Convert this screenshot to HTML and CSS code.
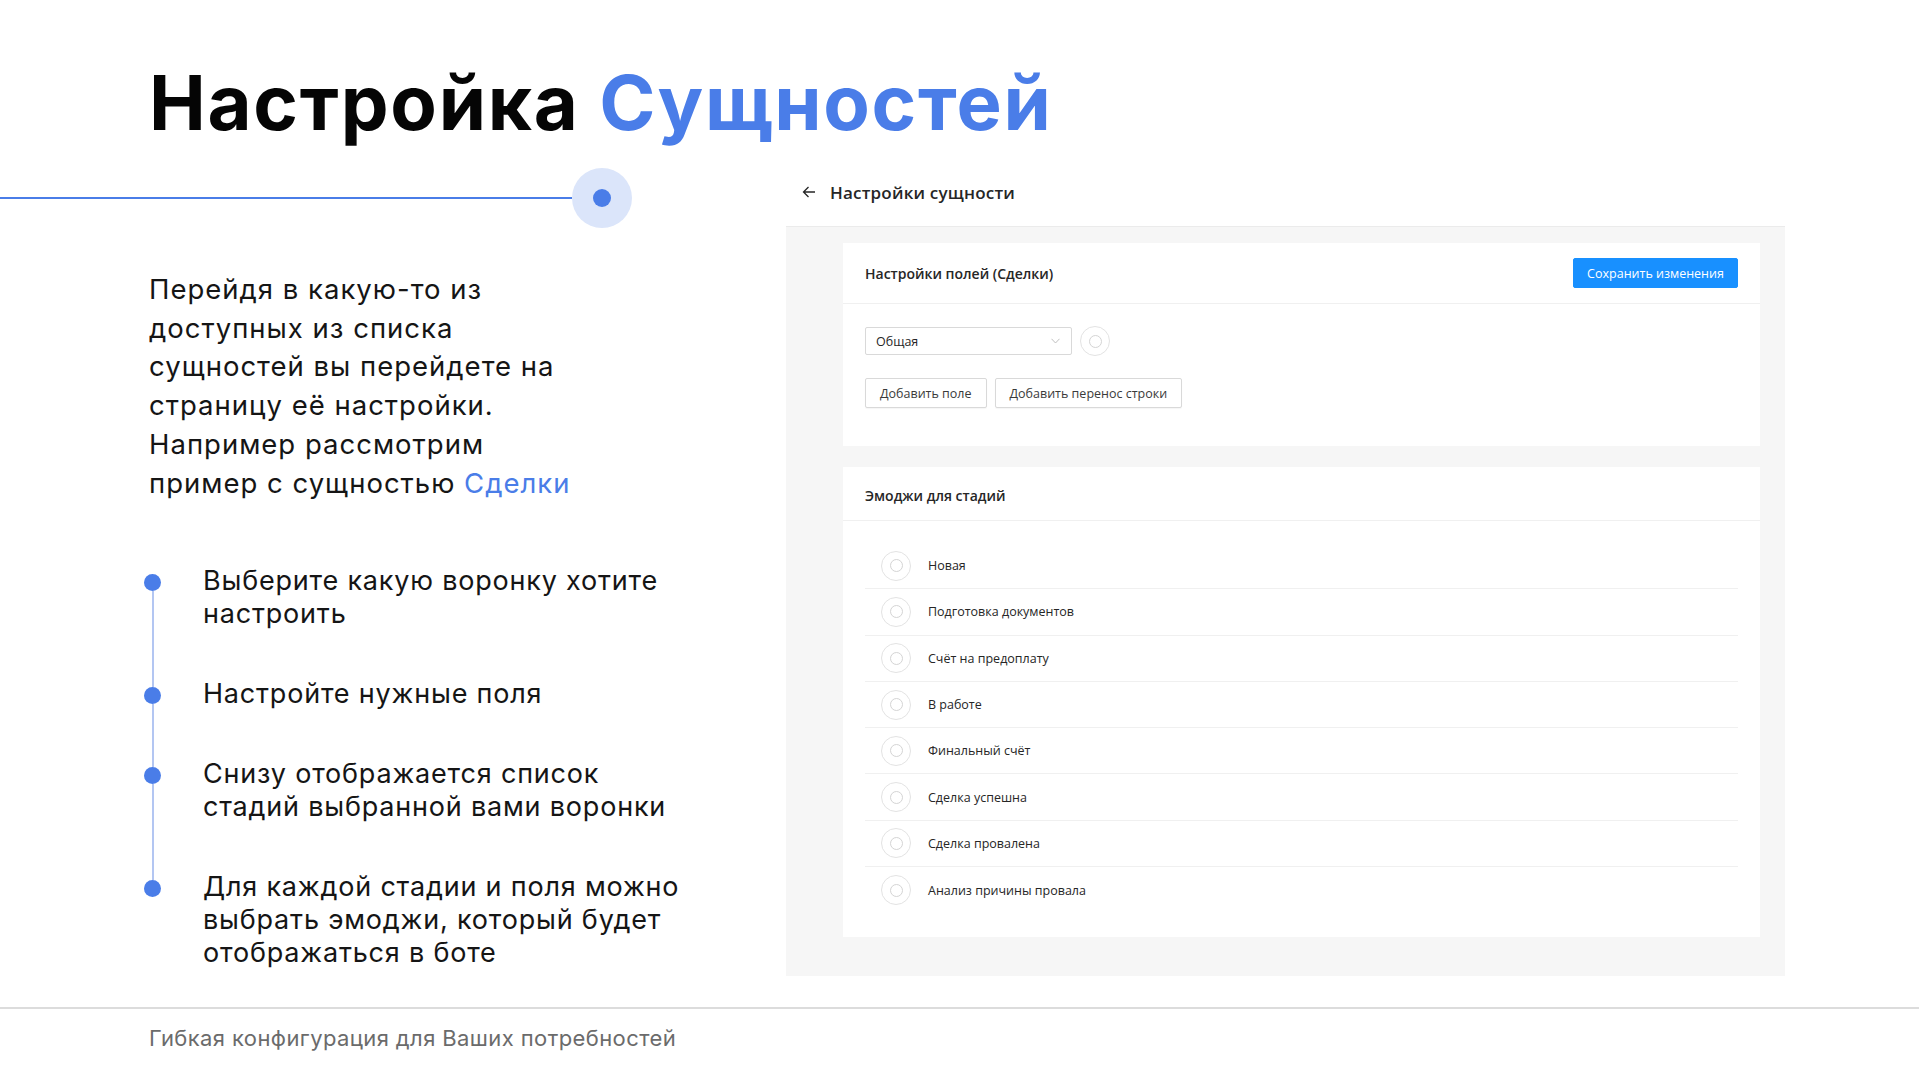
FILE: index.html
```html
<!DOCTYPE html>
<html lang="ru">
<head>
<meta charset="utf-8">
<title>Настройка Сущностей</title>
<link rel="stylesheet" href="styles.css">
</head>
<body>
<div class="slide">
  <h1 class="title">Настройка <span class="accent">Сущностей</span></h1>
  <div class="main">
    <div class="left">
      <div class="divider">
        <div class="divider-line"></div>
        <div class="halo"><div class="halo-dot"></div></div>
      </div>
      <p class="lead">Перейдя в какую-то из<br>доступных из списка<br>сущностей вы перейдете на<br>страницу её настройки.<br>Например рассмотрим<br>пример с сущностью <span class="accent">Сделки</span></p>
      <ul class="steps">
        <li class="step">
          <div class="marker"><span class="rail-top"></span><span class="dot"></span><span class="rail"></span></div>
          <div class="step-text">Выберите какую воронку хотите<br>настроить</div>
        </li>
        <li class="step">
          <div class="marker"><span class="rail-top"></span><span class="dot"></span><span class="rail"></span></div>
          <div class="step-text">Настройте нужные поля</div>
        </li>
        <li class="step">
          <div class="marker"><span class="rail-top"></span><span class="dot"></span><span class="rail"></span></div>
          <div class="step-text">Снизу отображается список<br>стадий выбранной вами воронки</div>
        </li>
        <li class="step">
          <div class="marker"><span class="rail-top"></span><span class="dot"></span><span class="rail"></span></div>
          <div class="step-text">Для каждой стадии и поля можно<br>выбрать эмоджи, который будет<br>отображаться в боте</div>
        </li>
      </ul>
    </div>
    <div class="right">
      <div class="panel-head">
        <svg class="back" width="14" height="12" viewBox="0 0 14 12"><path d="M13 6H1.5M6.5 1L1.5 6l5 5" fill="none" stroke="#262626" stroke-width="1.3"/></svg>
        <span class="panel-title">Настройки сущности</span>
      </div>
      <div class="panel">
        <section class="card">
          <header class="card-head card-head-tall">
            <h2 class="card-title">Настройки полей (Сделки)</h2>
            <button class="btn-primary">Сохранить изменения</button>
          </header>
          <div class="card-body fields-body">
            <div class="select-row">
              <div class="select">
                <span>Общая</span>
                <svg class="chev" width="9" height="6" viewBox="0 0 9 6"><path d="M0.5 0.8L4.5 5l4-4.2" fill="none" stroke="#bfbfbf" stroke-width="1"/></svg>
              </div>
              <span class="emoji-btn"><span class="emoji-inner"></span></span>
            </div>
            <div class="btn-row">
              <button class="btn">Добавить поле</button>
              <button class="btn">Добавить перенос строки</button>
            </div>
          </div>
        </section>
        <section class="card">
          <header class="card-head card-head-stages">
            <h2 class="card-title">Эмоджи для стадий</h2>
          </header>
          <div class="card-body stages-body">
            <ul class="stages">
              <li class="stage"><span class="emoji-btn"><span class="emoji-inner"></span></span><span>Новая</span></li>
              <li class="stage"><span class="emoji-btn"><span class="emoji-inner"></span></span><span>Подготовка документов</span></li>
              <li class="stage"><span class="emoji-btn"><span class="emoji-inner"></span></span><span>Счёт на предоплату</span></li>
              <li class="stage"><span class="emoji-btn"><span class="emoji-inner"></span></span><span>В работе</span></li>
              <li class="stage"><span class="emoji-btn"><span class="emoji-inner"></span></span><span>Финальный счёт</span></li>
              <li class="stage"><span class="emoji-btn"><span class="emoji-inner"></span></span><span>Сделка успешна</span></li>
              <li class="stage"><span class="emoji-btn"><span class="emoji-inner"></span></span><span>Сделка провалена</span></li>
              <li class="stage"><span class="emoji-btn"><span class="emoji-inner"></span></span><span>Анализ причины провала</span></li>
            </ul>
          </div>
        </section>
      </div>
    </div>
  </div>
  <footer class="footer">Гибкая конфигурация для Ваших потребностей</footer>
</div>
</body>
</html>
```

FILE: styles.css
```css
* { box-sizing: border-box; }

body {
  margin: 0;
  background: #ffffff;
}

.slide {
  width: 1919px;
  height: 1079px;
  display: flex;
  flex-direction: column;
  overflow: hidden;
  font-family: Inter, "Noto Sans", sans-serif;
  color: #151515;
}

.title {
  margin: 0;
  padding: 64px 0 0 149px;
  font-family: Inter, "Noto Sans", sans-serif;
  font-weight: 700;
  font-size: 76px;
  line-height: 76px;
  color: #050505;
  letter-spacing: 1.7px;
}

.accent { color: #4a7de8; }

.main {
  display: flex;
  margin-top: 28px;
}

.left {
  width: 786px;
  flex: none;
}

.divider {
  display: flex;
  align-items: center;
  height: 60px;
}

.divider-line {
  width: 572px;
  height: 2px;
  background: #4a7de8;
}

.halo {
  width: 60px;
  height: 60px;
  border-radius: 50%;
  background: #dbe5fa;
  display: flex;
  align-items: center;
  justify-content: center;
}

.halo-dot {
  width: 18px;
  height: 18px;
  border-radius: 50%;
  background: #4a7de8;
}

.lead {
  margin: 42px 0 0 149px;
  font-size: 27.5px;
  line-height: 38.7px;
  letter-spacing: 1px;
  white-space: nowrap;
}

.steps {
  list-style: none;
  margin: 62px 0 0 144px;
  padding: 0;
}

.step {
  display: flex;
}

.marker {
  width: 17px;
  margin-right: 42px;
  display: flex;
  flex-direction: column;
  align-items: center;
  flex: none;
}

.rail-top {
  width: 2px;
  height: 10px;
  background: #b3c6f2;
}

.dot {
  width: 17px;
  height: 17px;
  border-radius: 50%;
  background: #4a7de8;
  flex: none;
}

.rail {
  width: 2px;
  flex: 1;
  background: #b3c6f2;
}

.step:first-child .rail-top,
.step:last-child .rail { background: transparent; }

.step-text {
  font-size: 27px;
  line-height: 33px;
  letter-spacing: 0.8px;
  white-space: nowrap;
  padding-bottom: 47px;
}

.step:last-child .step-text { padding-bottom: 0; }

/* right side */
.right {
  width: 999px;
  flex: none;
  font-family: "Open Sans", "Noto Sans", sans-serif;
}

.panel-head {
  height: 48px;
  margin-bottom: 10px;
  display: flex;
  align-items: center;
  padding-left: 16px;
}

.back { margin-right: 14px; }

.panel-title {
  font-size: 17px;
  font-weight: 600;
  letter-spacing: 0.2px;
  color: #262626;
}

.panel {
  background: #f6f6f6;
  border-top: 1px solid #ebebeb;
  padding: 16px 25px 39px 57px;
}

.card {
  background: #ffffff;
}

.card + .card { margin-top: 21px; }

.card-head {
  height: 54px;
  border-bottom: 1px solid #f0f0f0;
  display: flex;
  align-items: center;
  justify-content: space-between;
  padding: 0 22px;
}

.card-head-tall { height: 61px; }

.card-head-stages { padding-top: 3px; }

.card-title {
  margin: 0;
  font-size: 14px;
  font-weight: 600;
  color: #262626;
}

.btn-primary {
  height: 30px;
  width: 165px;
  border: 1px solid #1890ff;
  border-radius: 2px;
  background: #1890ff;
  color: #ffffff;
  font-family: "Open Sans", "Noto Sans", sans-serif;
  font-size: 12.5px;
  padding: 0;
}

.card-body { padding: 0 22px; }

.fields-body { padding-top: 22px; padding-bottom: 38px; }

.select-row {
  display: flex;
  align-items: center;
  gap: 8px;
}

.select {
  width: 207px;
  height: 28px;
  border: 1px solid #d9d9d9;
  border-radius: 2px;
  display: flex;
  align-items: center;
  justify-content: space-between;
  padding: 0 11px 0 10px;
  font-size: 12.5px;
  color: #262626;
}

.emoji-btn {
  width: 30px;
  height: 30px;
  border-radius: 50%;
  border: 1px solid #e3e3e3;
  display: flex;
  align-items: center;
  justify-content: center;
  flex: none;
}

.emoji-inner {
  width: 13px;
  height: 13px;
  border-radius: 50%;
  border: 1px solid #d4d4d4;
}

.btn-row {
  display: flex;
  gap: 8px;
  margin-top: 22px;
}

.btn {
  height: 30px;
  border: 1px solid #d9d9d9;
  border-radius: 2px;
  background: #ffffff;
  box-shadow: 0 1px 1px rgba(0, 0, 0, 0.04);
  padding: 0 14px;
  font-family: "Open Sans", "Noto Sans", sans-serif;
  font-size: 12.5px;
  color: #3a3a3a;
}

.stages-body { padding-top: 22px; padding-bottom: 24px; }

.stages {
  list-style: none;
  margin: 0;
  padding: 0;
}

.stage {
  height: 46.3px;
  display: flex;
  align-items: center;
  border-bottom: 1px solid #f0f0f0;
  font-size: 12.5px;
  color: #262626;
}

.stage:last-child { border-bottom: none; }

.stage .emoji-btn { margin: 0 17px 0 16px; }

.footer {
  margin-top: auto;
  height: 72px;
  border-top: 2px solid #dcdcdc;
  display: flex;
  align-items: center;
  padding: 0 0 13px 149px;
  font-size: 22px;
  letter-spacing: 0.4px;
  color: #6b6b6b;
}
```
